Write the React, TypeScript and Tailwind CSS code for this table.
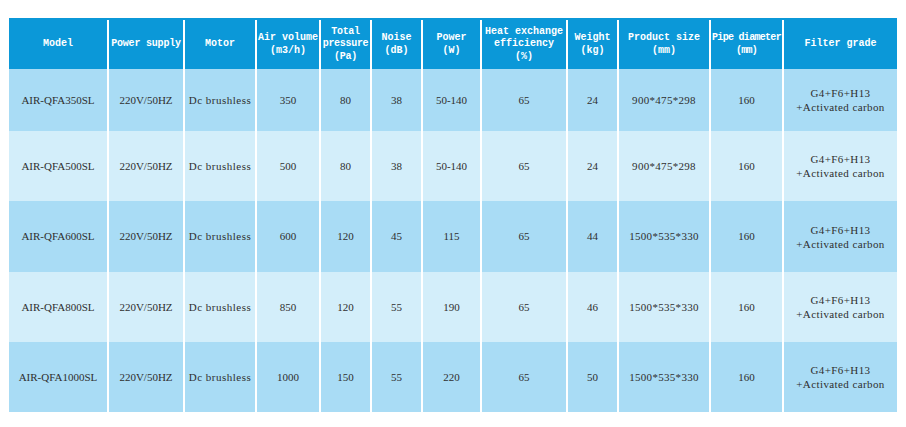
import React from "react";

type Row = {
  model: string;
  air: string;
  pressure: string;
  noise: string;
  power: string;
  weight: string;
  size: string;
  h: string;
  bg: string;
};

const cols = "grid grid-cols-[98px_76px_72px_64px_51px_51px_59px_86px_51px_92px_73px_115px]";

const headers: { label: React.ReactNode; cls?: string }[] = [
  { label: "Model" },
  { label: "Power supply", cls: "tracking-[-0.2px]" },
  { label: "Motor" },
  { label: <>Air volume<br />(m3/h)</> },
  { label: <>Total<br />pressure<br />(Pa)</>, cls: "tracking-[-0.3px]" },
  { label: <>Noise<br />(dB)</> },
  { label: <>Power<br />(W)</> },
  { label: <>Heat exchange<br />efficiency<br />(%)</> },
  { label: <>Weight<br />(kg)</> },
  { label: <>Product size<br />(mm)</> },
  { label: <>Pipe diameter<br />(mm)</>, cls: "tracking-[-0.7px]" },
  { label: "Filter grade" },
];

const rows: Row[] = [
  { model: "AIR-QFA350SL", air: "350", pressure: "80", noise: "38", power: "50-140", weight: "24", size: "900*475*298", h: "h-[62px]", bg: "bg-[#a9dcf5]" },
  { model: "AIR-QFA500SL", air: "500", pressure: "80", noise: "38", power: "50-140", weight: "24", size: "900*475*298", h: "h-[70px]", bg: "bg-[#d3eefa]" },
  { model: "AIR-QFA600SL", air: "600", pressure: "120", noise: "45", power: "115", weight: "44", size: "1500*535*330", h: "h-[71px]", bg: "bg-[#a9dcf5]" },
  { model: "AIR-QFA800SL", air: "850", pressure: "120", noise: "55", power: "190", weight: "46", size: "1500*535*330", h: "h-[70px]", bg: "bg-[#d3eefa]" },
  { model: "AIR-QFA1000SL", air: "1000", pressure: "150", noise: "55", power: "220", weight: "50", size: "1500*535*330", h: "h-[70px]", bg: "bg-[#a9dcf5]" },
];

function Cell({ children, first, className = "" }: { children: React.ReactNode; first?: boolean; className?: string }) {
  return (
    <div className={`flex items-center justify-center text-center ${first ? "" : "border-l-2 border-white"} ${className}`}>
      {children}
    </div>
  );
}

export default function App() {
  return (
    <div className="h-[427px] w-[906px] bg-white pl-[9px] pt-[18px]">
      <div className="w-[888px]">
        {/* header */}
        <div className={`${cols} h-[51px] bg-[#0b98d8] pt-[2px] font-['Liberation_Mono',monospace] text-[10px] font-bold leading-[12.5px] text-white`}>
          {headers.map((hd, i) => (
            <Cell key={i} first={i === 0} className={`whitespace-nowrap ${hd.cls ?? ""}`}>
              <span>{hd.label}</span>
            </Cell>
          ))}
        </div>

        {rows.map((r) => (
          <div key={r.model} className={`${cols} ${r.h} ${r.bg} font-['Liberation_Serif',serif] text-[11px] leading-[13px] text-[#2f2f2f]`}>
            <Cell first>{r.model}</Cell>
            <Cell>220V/50HZ</Cell>
            <Cell className="whitespace-nowrap tracking-[0.5px]">Dc brushless</Cell>
            <Cell>{r.air}</Cell>
            <Cell>{r.pressure}</Cell>
            <Cell>{r.noise}</Cell>
            <Cell>{r.power}</Cell>
            <Cell>65</Cell>
            <Cell>{r.weight}</Cell>
            <Cell className="tracking-[0.3px]">{r.size}</Cell>
            <Cell>160</Cell>
            <Cell className="leading-[14px] tracking-[0.4px]">
              <span>
                G4+F6+H13
                <br />
                +Activated carbon
              </span>
            </Cell>
          </div>
        ))}
      </div>
    </div>
  );
}
